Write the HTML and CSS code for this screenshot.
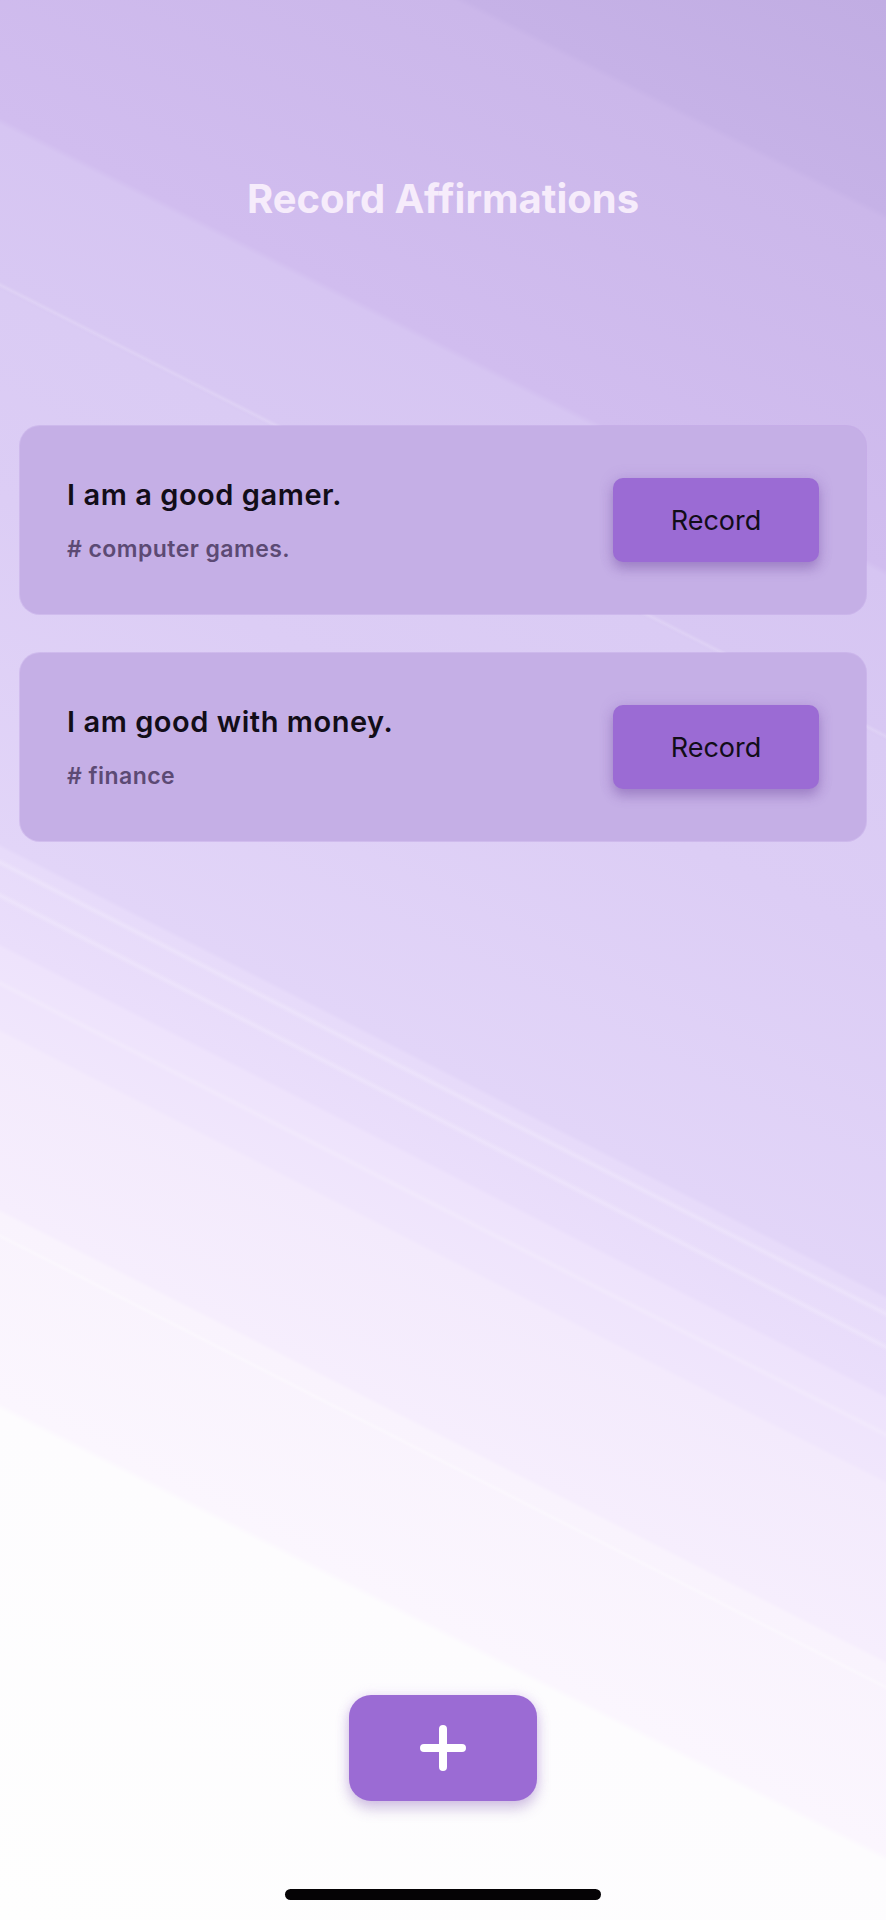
FILE: index.html
```html
<!DOCTYPE html>
<html lang="en">
<head>
<meta charset="utf-8">
<title>Record Affirmations</title>
<link rel="stylesheet" href="styles.css">
</head>
<body>
<div class="screen">
  <div class="stripes"></div>
  <header class="header">
    <h1 class="title">Record Affirmations</h1>
  </header>
  <main class="list">
    <section class="card">
      <div class="card-text">
        <p class="affirmation">I am a good gamer.</p>
        <p class="tag"># computer games.</p>
      </div>
      <button class="record-btn">Record</button>
    </section>
    <section class="card">
      <div class="card-text">
        <p class="affirmation">I am good with money.</p>
        <p class="tag"># finance</p>
      </div>
      <button class="record-btn">Record</button>
    </section>
  </main>
  <footer class="footer">
    <button class="fab" aria-label="Add affirmation">
      <svg width="46" height="46" viewBox="0 0 46 46" fill="none">
        <path d="M23 4 V42 M4 23 H42" stroke="#ffffff" stroke-width="8" stroke-linecap="round"/>
      </svg>
    </button>
    <div class="home-indicator"></div>
  </footer>
</div>
</body>
</html>
```

FILE: styles.css
```css
* { box-sizing: border-box; }
html, body { margin: 0; padding: 0; }
body {
  font-family: Inter, "Noto Sans", "Liberation Sans", sans-serif;
  background: #fefefe;
}
.screen {
  position: relative;
  width: 886px;
  min-height: 1920px;
  display: flex;
  flex-direction: column;
  overflow: hidden;
  background: linear-gradient(207deg,
    #c1ade3 0%,
    #c6b2e7 9%, #cbb7ea 9.3%,
    #d1bdef 24%, #d6c5f2 24.3%,
    #d8c8f3 31%, #dacbf4 31.3%,
    #dccdf5 40%,
    #e2d5f8 54.6%, #e7dbfa 54.8%,
    #eadefb 58.8%, #eee3fc 59%,
    #f0e6fc 62.4%, #f3eafc 62.6%,
    #f6eefd 70%, #f9f3fd 70.2%,
    #fbf6fe 78.2%, #fdfcfe 78.5%,
    #fefefe 100%);
}
.stripes {
  position: absolute;
  inset: 0;
  pointer-events: none;
  background:
    linear-gradient(207deg, transparent 30.9%, rgba(255,255,255,0.16) 31.05%, transparent 31.2%),
    linear-gradient(207deg, transparent 55.2%, rgba(255,255,255,0.2) 55.4%, transparent 55.6%),
    linear-gradient(207deg, transparent 56.6%, rgba(255,255,255,0.2) 56.8%, transparent 57%),
    linear-gradient(207deg, transparent 60.3%, rgba(255,255,255,0.16) 60.5%, transparent 60.7%),
    linear-gradient(207deg, transparent 71%, rgba(255,255,255,0.3) 71.15%, transparent 71.3%);
}
.header {
  position: relative;
  padding-top: 171px;
  text-align: center;
}
.title {
  margin: 0;
  font-size: 40px;
  font-weight: 700;
  line-height: 56px;
  color: #f6ecfb;
  letter-spacing: 0;
}
.list {
  position: relative;
  margin-top: 199px;
  padding: 0 20px;
  display: flex;
  flex-direction: column;
  gap: 39px;
}
.card {
  display: flex;
  align-items: center;
  justify-content: space-between;
  height: 188px;
  padding: 0 47px;
  border-radius: 20px;
  background: #c5afe6;
  box-shadow: 0 0 0 1px rgba(180,150,220,0.35);
}
.card-text {
  display: flex;
  flex-direction: column;
  gap: 24px;
}
.affirmation {
  margin: 0;
  font-size: 29px;
  font-weight: 600;
  line-height: 34px;
  color: #120d18;
  letter-spacing: 0.55px;
}
.tag {
  margin: 0;
  font-size: 23px;
  font-weight: 600;
  line-height: 26px;
  color: #5c4a74;
  letter-spacing: 0.45px;
}
.record-btn {
  width: 206px;
  height: 84px;
  border: none;
  border-radius: 10px;
  background: #9b6bd4;
  color: #120d18;
  font-family: inherit;
  font-size: 27px;
  font-weight: 400;
  box-shadow: 0 7px 12px rgba(100, 60, 150, 0.35), 0 0 14px rgba(150, 110, 200, 0.25);
}
.footer {
  position: relative;
  margin-top: auto;
  display: flex;
  flex-direction: column;
  align-items: center;
}
.fab {
  width: 188px;
  height: 106px;
  border: none;
  border-radius: 22px;
  background: #9b6bd4;
  display: flex;
  align-items: center;
  justify-content: center;
  box-shadow: 0 8px 14px rgba(110, 70, 160, 0.28), 0 0 12px rgba(200, 160, 240, 0.3);
}
.home-indicator {
  margin-top: 88px;
  margin-bottom: 20px;
  width: 316px;
  height: 11px;
  border-radius: 6px;
  background: #050305;
}
```
